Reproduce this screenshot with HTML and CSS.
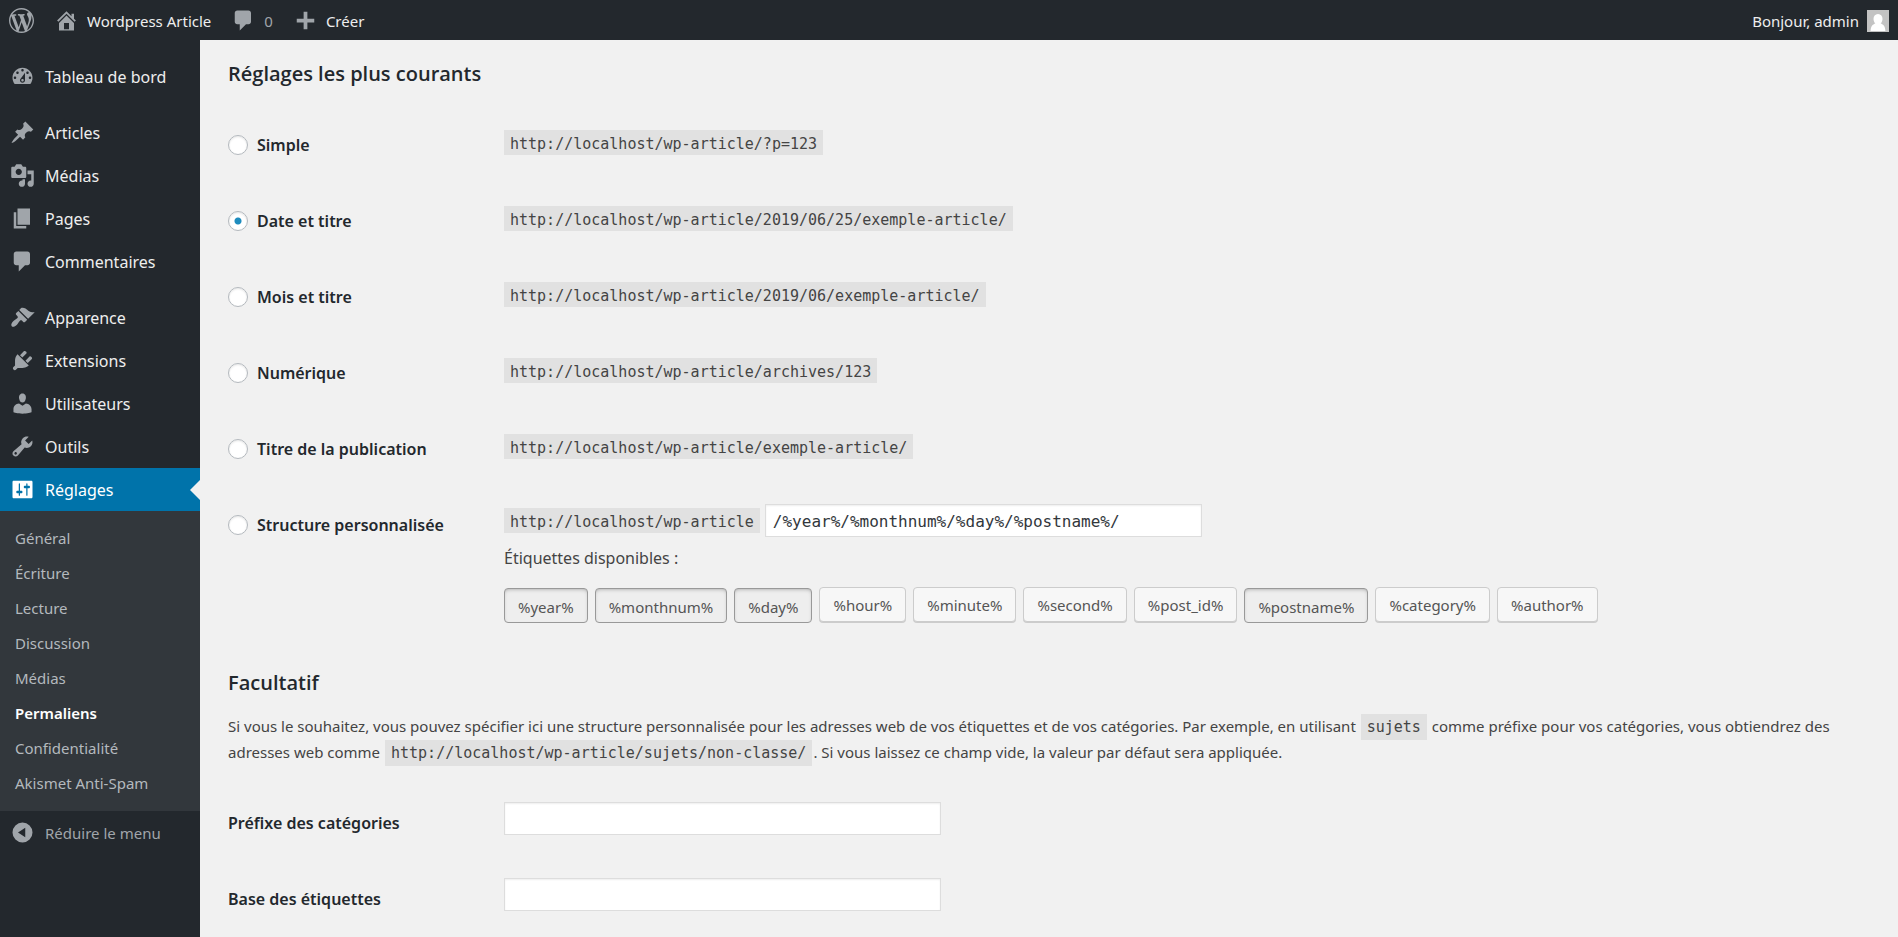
FILE: index.html
```html
<!DOCTYPE html>
<html lang="fr">
<head>
<meta charset="utf-8">
<title>Réglages des permaliens</title>
<link rel="stylesheet" href="styles.css">
</head>
<body>
<header class="adminbar">
  <a class="bar-item" href="#" aria-label="À propos de WordPress"><svg class="icon" viewBox="0 0 20 20"><path d="M20 10c0-5.51-4.49-10-10-10C4.48 0 0 4.49 0 10c0 5.52 4.48 10 10 10 5.51 0 10-4.48 10-10zM7.78 15.37L4.37 6.22c.55-.02 1.17-.08 1.17-.08.5-.06.44-1.13-.06-1.11 0 0-1.45.11-2.37.11-.18 0-.37 0-.58-.01C4.12 2.69 6.87 1.11 10 1.11c2.33 0 4.45.87 6.05 2.34-.68-.11-1.65.39-1.65 1.58 0 .74.45 1.36.9 2.1.35.61.55 1.36.55 2.46 0 1.49-1.4 5-1.4 5l-3.03-8.37c.54-.02.82-.17.82-.17.5-.05.44-1.25-.06-1.22 0 0-1.44.12-2.38.12-.87 0-2.33-.12-2.33-.12-.5-.03-.56 1.2-.06 1.22l.92.08 1.26 3.41zM17.41 10c.24-.64.74-1.87.43-4.25.7 1.29 1.05 2.71 1.05 4.25 0 3.29-1.73 6.24-4.4 7.78.97-2.59 1.94-5.2 2.92-7.78zM6.1 18.09C3.12 16.65 1.11 13.53 1.11 10c0-1.3.23-2.48.72-3.59C3.25 10.3 4.67 14.2 6.1 18.09zm4.03-6.63l2.58 6.98c-.86.29-1.76.45-2.71.45-.79 0-1.57-.11-2.29-.33.81-2.38 1.62-4.74 2.42-7.1z"/></svg></a>
  <a class="bar-item" href="#"><svg class="icon" viewBox="0 0 20 20"><path d="M16 8.5l1.53 1.53-1.06 1.06L10 4.6l-6.47 6.49-1.06-1.06L10 2.5l4 4v-2h2v4zm-6-2.46l6 5.99V18H4v-5.97zM12 17v-5H8v5h4z"/></svg><span>Wordpress Article</span></a>
  <a class="bar-item" href="#"><svg class="icon" viewBox="0 0 20 20"><path d="M5 2h9c1.1 0 2 .9 2 2v7c0 1.1-.9 2-2 2h-2l-5 5v-5H5c-1.1 0-2-.9-2-2V4c0-1.1.9-2 2-2z"/></svg><span class="count">0</span></a>
  <a class="bar-item" href="#"><svg class="icon" viewBox="0 0 20 20"><path d="M17 8.500v3h-5.500V17h-3v-5.500H3v-3h5.500V3h3v5.500z"/></svg><span>Créer</span></a>
  <a class="bar-item account" href="#"><span>Bonjour, admin</span><svg class="avatar" viewBox="0 0 22 22"><path fill="#c3c3c3" d="M0 0h22v22H0z"/><path fill="#fff" d="M11 4c3 0 4.500 2.200 4.500 5 0 1.900-.8 3.500-1.900 4.600 2.900.8 4.600 3 4.800 7.400H3.600c.2-4.400 1.900-6.600 4.800-7.400C7.300 12.500 6.500 10.900 6.500 9c0-2.800 1.500-5 4.500-5z"/></svg></a>
</header>
<div class="layout">
  <nav class="sidebar" aria-label="Menu principal">
    <ul class="menu">
      <li><a class="menu-link" href="#"><svg class="icon" viewBox="0 0 20 20"><path d="M3.760 16h12.480c1.100-1.370 1.760-3.110 1.760-5 0-4.420-3.580-8-8-8s-8 3.580-8 8c0 1.890.66 3.630 1.760 5zM10 4c.55 0 1 .45 1 1s-.45 1-1 1-1-.45-1-1 .45-1 1-1zM6 6c.55 0 1 .45 1 1s-.45 1-1 1-1-.45-1-1 .45-1 1-1zm8 0c.55 0 1 .45 1 1s-.45 1-1 1-1-.45-1-1 .45-1 1-1zm-5.370 5.550L12 7v6c0 1.100-.9 2-2 2s-2-.9-2-2c0-.57.24-1.080.63-1.450zM4 10c.55 0 1 .45 1 1s-.45 1-1 1-1-.45-1-1 .45-1 1-1zm12 0c.55 0 1 .45 1 1s-.45 1-1 1-1-.45-1-1 .45-1 1-1zm-5 3c0-.55-.45-1-1-1s-1 .45-1 1 .45 1 1 1 1-.45 1-1z"/></svg>Tableau de bord</a></li>
      <li class="group-start"><a class="menu-link" href="#"><svg class="icon" viewBox="0 0 20 20"><path d="M10.440 3.020l1.820-1.820 6.360 6.350-1.830 1.820c-1.050-.68-2.480-.57-3.410.36l-.75.75c-.92.93-1.040 2.350-.35 3.410l-1.830 1.820-2.410-2.410-2.800 2.790c-.42.42-3.380 2.710-3.800 2.290s1.860-3.390 2.280-3.810l2.790-2.790L4.100 9.360l1.830-1.820c1.050.69 2.480.57 3.400-.36l.75-.75c.93-.92 1.050-2.350.36-3.410z"/></svg>Articles</a></li>
      <li><a class="menu-link" href="#"><svg class="icon" viewBox="0 0 20 20"><path d="M13 11V4c0-.55-.45-1-1-1h-1.670L9 1H5L3.670 3H2c-.55 0-1 .45-1 1v7c0 .55.45 1 1 1h10c.55 0 1-.45 1-1zM7 4.500c1.380 0 2.500 1.120 2.500 2.500S8.380 9.500 7 9.500 4.500 8.380 4.500 7 5.620 4.500 7 4.500zM14 6h5v10.500c0 1.380-1.120 2.500-2.500 2.500S14 17.880 14 16.500s1.120-2.500 2.500-2.500c.17 0 .34.02.5.05V9h-3V6zm-4 8.050V13h2v3.500c0 1.380-1.120 2.500-2.500 2.500S7 17.880 7 16.500 8.120 14 9.500 14c.17 0 .34.02.5.05z"/></svg>Médias</a></li>
      <li><a class="menu-link" href="#"><svg class="icon" viewBox="0 0 20 20"><path d="M6 15V2h10v13H6zm-1 1h8v2H3V5h2v11z"/></svg>Pages</a></li>
      <li><a class="menu-link" href="#"><svg class="icon" viewBox="0 0 20 20"><path d="M5 2h9c1.100 0 2 .9 2 2v7c0 1.100-.9 2-2 2h-2l-5 5v-5H5c-1.100 0-2-.9-2-2V4c0-1.100.9-2 2-2z"/></svg>Commentaires</a></li>
      <li class="group-start"><a class="menu-link" href="#"><svg class="icon" viewBox="0 0 20 20"><path d="M14.480 11.060L7.410 3.990l1.500-1.500c.5-.56 2.300-.47 3.510.32 1.210.8 1.430 1.280 2.910 2.100 1.180.64 2.450 1.260 4.450.85zm-.71.71L6.700 4.700 4.930 6.470c-.39.39-.39 1.020 0 1.410l1.060 1.060c.39.39.39 1.030 0 1.420-.6.6-1.430 1.110-2.210 1.690-.35.26-.7.53-1.010.84C1.430 14.230.4 16.080 1.400 17.070c.99 1 2.840-.03 4.180-1.360.31-.31.58-.66.85-1.020.57-.78 1.080-1.610 1.690-2.210.39-.39 1.020-.39 1.410 0l1.060 1.060c.39.39 1.020.39 1.410 0z"/></svg>Apparence</a></li>
      <li><a class="menu-link" href="#"><svg class="icon" viewBox="0 0 20 20"><path d="M13.110 4.360L9.870 7.600 8 5.730l3.240-3.240c.35-.34 1.050-.2 1.560.32.52.51.66 1.210.31 1.550zm-8 1.770l.91-1.120 9.010 9.010-1.190.84c-.71.71-2.630 1.160-3.820 1.160H6.140L4.900 17.260c-.59.59-1.540.59-2.120 0-.59-.58-.59-1.530 0-2.120l1.240-1.240v-3.880c0-1.130.4-3.190 1.090-3.890zm7.260 3.970l3.240-3.240c.34-.35 1.040-.21 1.550.31.52.51.66 1.210.31 1.550l-3.240 3.250z"/></svg>Extensions</a></li>
      <li><a class="menu-link" href="#"><svg class="icon" viewBox="0 0 20 20"><path d="M10 9.250c-2.270 0-2.730-3.440-2.730-3.440C7 4.020 7.820 2 9.970 2c2.160 0 2.980 2.020 2.710 3.810 0 0-.41 3.440-2.680 3.440zm0 2.570L12.720 10c2.390 0 4.520 2.330 4.520 4.530v2.490s-3.650 1.130-7.240 1.130c-3.650 0-7.240-1.130-7.240-1.130v-2.490c0-2.250 1.940-4.480 4.470-4.480z"/></svg>Utilisateurs</a></li>
      <li><a class="menu-link" href="#"><svg class="icon" viewBox="0 0 20 20"><path d="M16.680 9.770c-1.340 1.340-3.300 1.670-4.950.99l-5.410 6.520c-.99.99-2.590.99-3.580 0s-.99-2.590 0-3.570l6.520-5.420c-.68-1.650-.35-3.610.99-4.950 1.280-1.280 3.120-1.620 4.720-1.060l-2.890 2.890 2.820 2.820 2.860-2.870c.53 1.580.18 3.390-1.080 4.650zM3.810 16.210c.4.39 1.040.39 1.430 0 .4-.4.4-1.040 0-1.430-.39-.4-1.030-.4-1.430 0-.39.39-.39 1.030 0 1.430z"/></svg>Outils</a></li>
      <li><a class="menu-link current" href="#"><svg class="icon" viewBox="0 0 20 20"><path d="M18 16V4c0-.55-.45-1-1-1H3c-.55 0-1 .45-1 1v12c0 .55.45 1 1 1h14c.55 0 1-.45 1-1zM8 11h1c.55 0 1 .45 1 1s-.45 1-1 1H8v1.500c0 .28-.22.5-.5.5s-.5-.22-.5-.5V13H6c-.55 0-1-.45-1-1s.45-1 1-1h1V5.500c0-.28.22-.5.5-.5s.5.22.5.5V11zm5-2h-1c-.55 0-1-.45-1-1s.45-1 1-1h1V5.500c0-.28.22-.5.5-.5s.5.22.5.5V7h1c.55 0 1 .45 1 1s-.45 1-1 1h-1v5.500c0 .28-.22.5-.5.5s-.5-.22-.5-.5V9z"/></svg>Réglages</a>
        <ul class="submenu">
          <li><a href="#">Général</a></li>
          <li><a href="#">Écriture</a></li>
          <li><a href="#">Lecture</a></li>
          <li><a href="#">Discussion</a></li>
          <li><a href="#">Médias</a></li>
          <li><a href="#" class="active" aria-current="page">Permaliens</a></li>
          <li><a href="#">Confidentialité</a></li>
          <li><a href="#">Akismet Anti-Spam</a></li>
        </ul>
      </li>
    </ul>
    <button class="collapse" type="button"><svg class="icon" viewBox="0 0 20 20"><path fill-rule="evenodd" d="M10 2a8 8 0 1 0 0 16 8 8 0 1 0 0-16zM12.200 6.200v7.600L6.400 10z"/></svg>Réduire le menu</button>
  </nav>
  <main class="content">
    <form>
      <h2>Réglages les plus courants</h2>
      <div class="row">
        <label class="name"><input type="radio" name="structure">Simple</label>
        <div class="value"><code>http://localhost/wp-article/?p=123</code></div>
      </div>
      <div class="row">
        <label class="name"><input type="radio" name="structure" checked>Date et titre</label>
        <div class="value"><code>http://localhost/wp-article/2019/06/25/exemple-article/</code></div>
      </div>
      <div class="row">
        <label class="name"><input type="radio" name="structure">Mois et titre</label>
        <div class="value"><code>http://localhost/wp-article/2019/06/exemple-article/</code></div>
      </div>
      <div class="row">
        <label class="name"><input type="radio" name="structure">Numérique</label>
        <div class="value"><code>http://localhost/wp-article/archives/123</code></div>
      </div>
      <div class="row">
        <label class="name"><input type="radio" name="structure">Titre de la publication</label>
        <div class="value"><code>http://localhost/wp-article/exemple-article/</code></div>
      </div>
      <div class="row">
        <label class="name"><input type="radio" name="structure">Structure personnalisée</label>
        <div class="value">
          <div class="custom"><code>http://localhost/wp-article</code><input class="text" type="text" aria-label="Structure personnalisée" value="/%year%/%monthnum%/%day%/%postname%/"></div>
          <p class="tags-title">Étiquettes disponibles :</p>
          <div class="tags">
            <button type="button" class="tag on">%year%</button>
            <button type="button" class="tag on">%monthnum%</button>
            <button type="button" class="tag on">%day%</button>
            <button type="button" class="tag">%hour%</button>
            <button type="button" class="tag">%minute%</button>
            <button type="button" class="tag">%second%</button>
            <button type="button" class="tag">%post_id%</button>
            <button type="button" class="tag on">%postname%</button>
            <button type="button" class="tag">%category%</button>
            <button type="button" class="tag">%author%</button>
          </div>
        </div>
      </div>
      <h2 class="optional">Facultatif</h2>
      <p class="intro">Si vous le souhaitez, vous pouvez spécifier ici une structure personnalisée pour les adresses web de vos étiquettes et de vos catégories. Par exemple, en utilisant <code>sujets</code> comme préfixe pour vos catégories, vous obtiendrez des adresses web comme <code>http://localhost/wp-article/sujets/non-classe/</code>. Si vous laissez ce champ vide, la valeur par défaut sera appliquée.</p>
      <div class="row">
        <label class="name" for="category-base">Préfixe des catégories</label>
        <div class="value"><input class="text" id="category-base" type="text"></div>
      </div>
      <div class="row">
        <label class="name" for="tag-base">Base des étiquettes</label>
        <div class="value"><input class="text" id="tag-base" type="text"></div>
      </div>
    </form>
  </main>
</div>
</body>
</html>
```
FILE: styles.css
```css
* { box-sizing: border-box; }
body {
  margin: 0;
  min-height: 100vh;
  display: flex;
  flex-direction: column;
  background: #f1f1f1;
  color: #444;
  font: 15px/26px "Noto Sans", "Open Sans", sans-serif;
}
a { color: inherit; text-decoration: none; }
ul { list-style: none; margin: 0; padding: 0; }
h2, p { margin: 0; }
.icon { width: 25px; height: 25px; flex: none; fill: #a0a5aa; }

/* Top bar */
.adminbar {
  display: flex;
  align-items: center;
  gap: 20px;
  height: 40px;
  padding: 1px 9px 0;
  background: #23282d;
  color: #eee;
}
.bar-item { display: flex; align-items: center; gap: 8px; }
.count { color: #a0a5aa; }
.account { margin-left: auto; }
.avatar { width: 22px; height: 22px; }

/* Side menu */
.layout { display: flex; flex: 1; }
.sidebar { width: 200px; flex: none; padding-top: 15px; background: #23282d; }
.group-start { margin-top: 13px; }
.menu-link {
  position: relative;
  display: flex;
  align-items: center;
  gap: 10px;
  height: 43px;
  padding-left: 10px;
  color: #eee;
  font-size: 16px;
}
.current { background: #0073aa; color: #fff; }
.current .icon { fill: #fff; }
.current::after {
  content: "";
  position: absolute;
  right: 0;
  top: 12px;
  border: solid transparent;
  border-width: 10px 10px 10px 0;
  border-right-color: #f1f1f1;
}
.submenu { padding: 10px 0; background: #32373c; color: #b4b9be; }
.submenu a { display: block; padding-left: 15px; line-height: 35px; }
.submenu .active { color: #fff; font-weight: 600; }
.collapse {
  display: flex;
  align-items: center;
  gap: 10px;
  width: 100%;
  height: 43px;
  padding: 0 0 0 10px;
  border: 0;
  background: none;
  color: #a0a5aa;
  font: inherit;
}

/* Settings form */
.content { flex: 1; min-width: 0; padding: 21px 24px 0 28px; }
h2 {
  margin-bottom: 19px;
  color: #23282d;
  font: 600 20px/26px "Open Sans", "Noto Sans", sans-serif;
}
.row { display: flex; min-height: 76px; }
.name {
  display: flex;
  align-items: center;
  gap: 9px;
  align-self: flex-start;
  flex: none;
  width: 276px;
  padding-top: 26px;
  color: #23282d;
  font-size: 16px;
  font-weight: 600;
}
.name input {
  appearance: none;
  width: 20px;
  height: 20px;
  margin: 0;
  border: 1px solid #b4b9be;
  border-radius: 50%;
  background: #fff;
  box-shadow: inset 0 1px 2px rgba(0, 0, 0, .1);
}
.name input:checked { background: radial-gradient(circle, #1e8cbe 3px, #fff 4px); }
.value { flex: 1; min-width: 0; padding-top: 18px; }
code {
  padding: 6px 6px 2px;
  background: #e1e1e1;
  font: 15px/17px "DejaVu Sans Mono", monospace;
}
.value > code { display: inline-block; margin-top: 6px; }
.custom { display: flex; align-items: center; gap: 5px; }
.text {
  display: block;
  width: 437px;
  height: 33px;
  padding: 2px 7px 0;
  border: 1px solid #ddd;
  background: #fff;
  box-shadow: inset 0 1px 2px rgba(0, 0, 0, .07);
  color: #32373c;
  font: 16px "DejaVu Sans Mono", monospace;
}
.tags-title { margin: 8px 0 16px; font-size: 16px; }
.tags { display: flex; flex-wrap: wrap; gap: 7px; }
.tag {
  height: 35px;
  padding: 0 13px;
  border: 1px solid #ccc;
  border-radius: 4px;
  background: #f7f7f7;
  box-shadow: 0 1px 0 #ccc;
  color: #555;
  font: inherit;
}
.on {
  margin-top: 1px;
  padding-top: 2px;
  border-color: #999;
  background: #eee;
  box-shadow: inset 0 2px 5px -3px rgba(0, 0, 0, .5);
}
.optional { margin: 47px 0 17px; }
.intro { margin-bottom: 19px; }
.intro code { padding: 4px 6px; margin: 0 1px; }
```
